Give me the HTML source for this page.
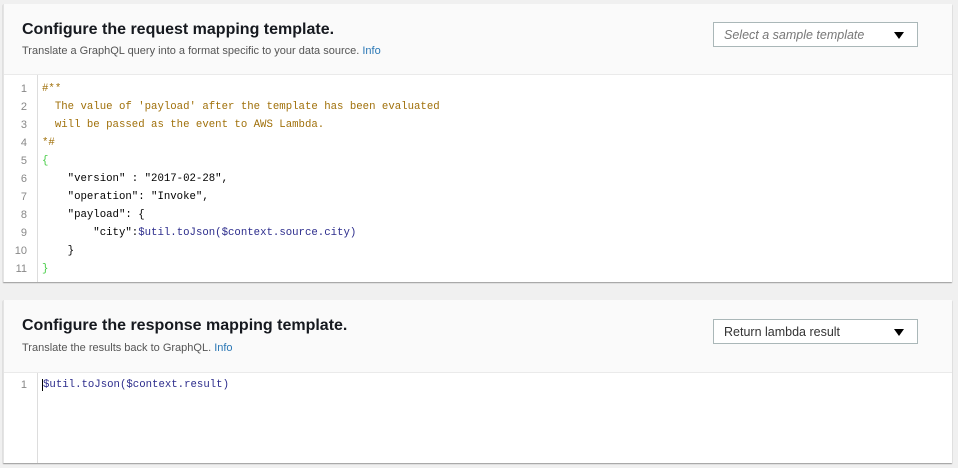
<!DOCTYPE html>
<html><head><style>
body{margin:0;width:958px;height:468px;background:#f0f0f0;font-family:"Liberation Sans",sans-serif;position:relative;overflow:hidden}
.card{position:absolute;left:3px;width:948px;background:#fff;box-shadow:0 1px 1px #999;border-left:1px solid #e4e4e4}
.hd{position:absolute;left:0;top:0;right:0;background:#fafafa;border-bottom:1px solid #eaeaea}
.t{position:absolute;left:18px;font-weight:bold;font-size:16px;color:#16191f}
.s{position:absolute;left:18px;font-size:11px;color:#555}
.s span{color:#2a77b5}
.sel{position:absolute;left:709px;width:205px;height:25px;border:1px solid #aab7b8;background:#fff;font-size:12.5px;line-height:25px;box-sizing:border-box;padding-left:10px;color:#333}
.sel:after{content:"";position:absolute;right:13px;top:9px;border-left:5px solid transparent;border-right:5px solid transparent;border-top:7px solid #000}
.g{position:absolute;left:0;width:33px;border-right:1px solid #ddd;background:#fff}
.code{position:absolute;left:38px;font-family:"Liberation Mono",monospace;font-size:10.7px;line-height:18px;white-space:pre;color:#000}
.ln{position:absolute;left:0;width:23px;text-align:right;font-family:"Liberation Sans",sans-serif;font-size:11px;line-height:18px;color:#888}
.c{color:#a0700a}.b{color:#4c4}.v{color:#2c2c8c}
</style></head><body>
<div class="card" style="top:4px;height:278px">
<div class="hd" style="height:70px"></div>
<div class="t" style="top:17px">Configure the request mapping template.</div>
<div class="s" style="top:41px">Translate a GraphQL query into a format specific to your data source. <span>Info</span></div>
<div class="sel" style="top:18px;color:#777;font-style:italic">Select a sample template</div>
<div class="g" style="top:71px;height:207px"></div>
<div class="ln" style="top:76px">1<br>2<br>3<br>4<br>5<br>6<br>7<br>8<br>9<br>10<br>11</div>
<div class="code" style="top:76px"><span class="c">#**
  The value of 'payload' after the template has been evaluated
  will be passed as the event to AWS Lambda.
*#</span>
<span class="b">{</span>
    "version" : "2017-02-28",
    "operation": "Invoke",
    "payload": {
        "city":<span class="v">$util.toJson($context.source.city)</span>
    }
<span class="b">}</span></div>
</div>
<div class="card" style="top:300px;height:163px">
<div class="hd" style="height:72px"></div>
<div class="t" style="top:17px">Configure the response mapping template.</div>
<div class="s" style="top:42px">Translate the results back to GraphQL. <span>Info</span></div>
<div class="sel" style="top:19px">Return lambda result</div>
<div class="g" style="top:73px;height:90px"></div>
<div class="ln" style="top:76px">1</div>
<div class="code" style="top:76px"><span class="v" style="border-left:1px solid #000">$util.toJson($context.result)</span></div>
</div>
</body></html>
